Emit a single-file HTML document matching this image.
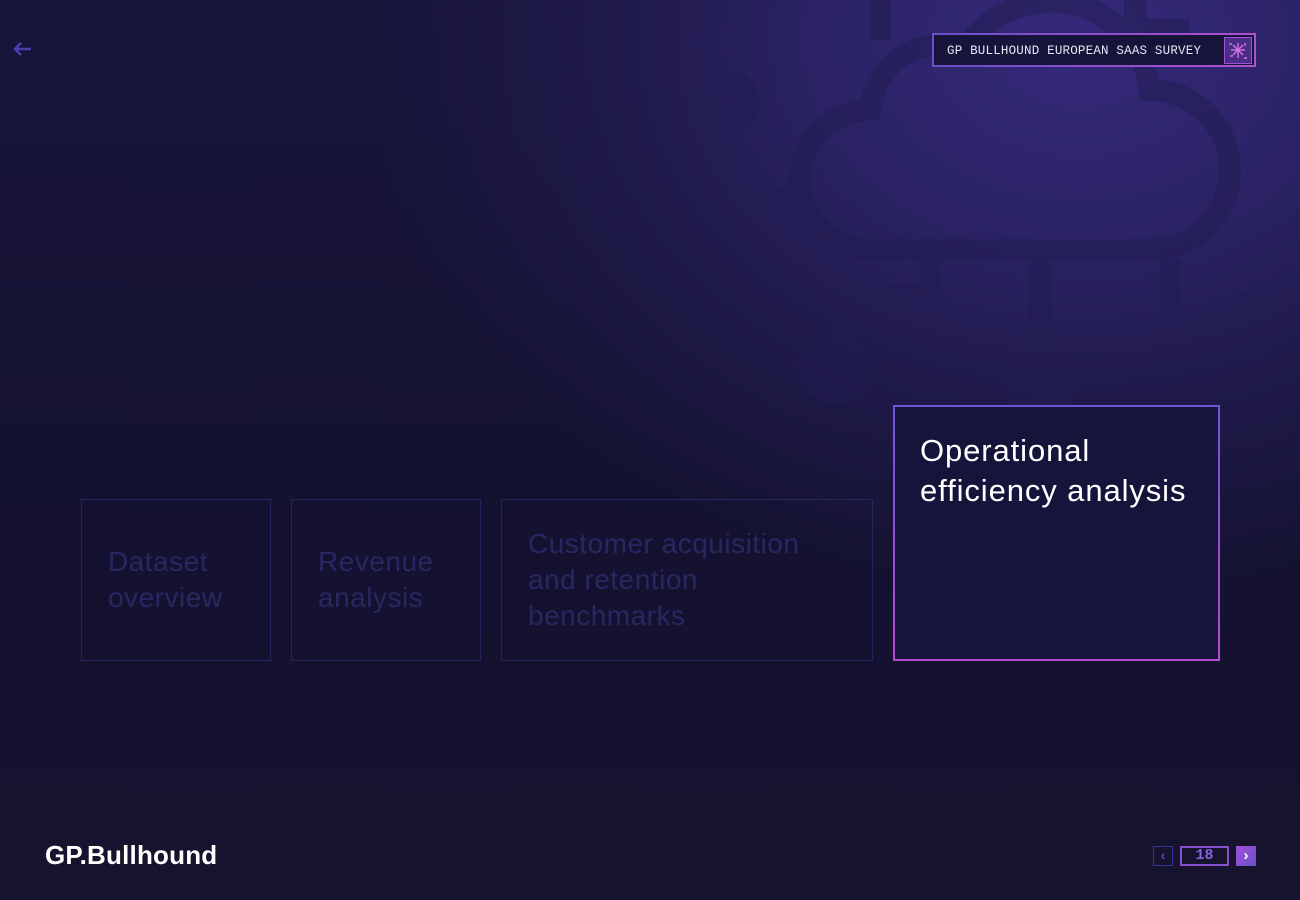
<!DOCTYPE html>
<html><head><meta charset="utf-8"><style>
*{margin:0;padding:0;box-sizing:border-box}
body{width:1300px;height:900px;overflow:hidden;position:relative;font-family:"Liberation Sans",sans-serif;
background:radial-gradient(ellipse 720px 560px at 1080px 40px,#34297a 0%,#2b2366 35%,#1f1a4a 65%,rgba(22,20,48,0) 100%),linear-gradient(180deg,#17143a,#141230 60%,#16132f);}
.cloud{position:absolute;left:690px;top:0;opacity:.5}
.tag{position:absolute;left:932px;top:33px;width:324px;height:34px;background:#16143a;border:2px solid;border-image:linear-gradient(90deg,#6a4fc8,#b04fd0) 1;}
.tag span{position:absolute;left:13px;top:9px;font-family:"Liberation Mono",monospace;font-size:12.5px;color:#e8e6f5;letter-spacing:.2px}
.tag .ic{position:absolute;right:2px;top:2px;width:28px;height:27px;border:1px solid #a050d0;background:#4a2d86}
.box{position:absolute;border:1px solid #28245c;padding:0 26px;font-size:28px;line-height:36px;color:#2a2662;letter-spacing:.5px}
.act{position:absolute;left:893px;top:405px;width:327px;height:256px;background:#16143a;border:2px solid;border-image:linear-gradient(180deg,#7055d8,#b44ad0) 1;padding:24px 25px;color:#fff;font-size:31px;line-height:40px;letter-spacing:.9px}
.logo{position:absolute;left:45px;top:840px;color:#fff;font-size:26px;font-weight:bold;letter-spacing:.2px}
.pg{position:absolute;top:846px;height:20px}
</style></head><body>
<svg class="cloud" width="610" height="420" viewBox="0 0 610 420" fill="none" stroke="#221d52" stroke-width="22">
<path d="M180 250 H460 a80 80 0 0 0 0-160 a100 100 0 0 0-185-40 a70 70 0 0 0-95 60 a70 70 0 0 0 0 140z"/>
<path d="M37 100 v80 a20 20 0 0 0 20 20 h60"/><circle cx="37" cy="103" r="22" fill="#221d52"/>
<path d="M240 260 v20 a15 15 0 0 1-15 15 h-50 a20 20 0 0 0-20 20 v40"/><circle cx="145" cy="368" r="25" fill="#221d52"/>
<path d="M350 260 v110"/><circle cx="350" cy="385" r="25" fill="#221d52"/>
<path d="M480 260 v40 a20 20 0 0 0 20 20 h60"/><circle cx="560" cy="325" r="22" fill="#221d52"/>
<path d="M190 0 v40"/><path d="M445 0 v15 a15 15 0 0 0 15 15 h40"/>
</svg>
<svg style="position:absolute;left:12px;top:41px" width="20" height="16" viewBox="0 0 20 16" fill="none" stroke="#4a3fb0" stroke-width="2.5"><path d="M19 8H3M9 2L3 8l6 6"/></svg>
<div class="tag"><span>GP BULLHOUND EUROPEAN SAAS SURVEY</span><div class="ic">
<svg width="26" height="25" viewBox="0 0 26 25" stroke="#d070e0" stroke-width="1.5" fill="none"><path d="M6 12h14M13 5v15M8 7l10 10M18 7l-10 10M4 6h3M19 20h3M5 18h3M20 5v3"/></svg></div></div>
<div class="box" style="left:81px;top:499px;width:190px;height:162px;padding-top:44px">Dataset<br>overview</div>
<div class="box" style="left:291px;top:499px;width:190px;height:162px;padding-top:44px">Revenue<br>analysis</div>
<div class="box" style="left:501px;top:499px;width:372px;height:162px;padding-top:26px">Customer acquisition<br>and retention<br>benchmarks</div>
<div class="act">Operational<br>efficiency analysis</div>
<div class="logo">GP.Bullhound</div>
<div class="pg" style="left:1153px;width:20px;border:1px solid #3a3490;color:#5a4fc0;font-size:14px;text-align:center;line-height:17px;font-weight:bold">&#8249;</div>
<div class="pg" style="left:1180px;width:49px;border:2px solid #8a4fd0;color:#8a5fe0;font-family:'Liberation Mono',monospace;font-weight:bold;font-size:15px;text-align:center;line-height:16px">18</div>
<div class="pg" style="left:1236px;width:20px;background:linear-gradient(135deg,#a050d8,#6a50c8);color:#fff;font-size:15px;text-align:center;line-height:19px;font-weight:bold">&#8250;</div>
</body></html>
